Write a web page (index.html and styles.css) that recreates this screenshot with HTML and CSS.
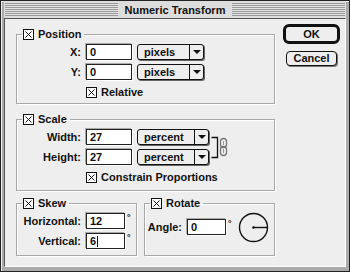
FILE: index.html
```html
<!DOCTYPE html>
<html lang="en">
<head>
  <title>Numeric Transform</title>
  <link rel="stylesheet" href="styles.css">
</head>
<body>
  <div class="window">
    <div class="titlebar">
      <div class="stripes"></div>
      <span class="title">Numeric Transform</span>
      <div class="stripes"></div>
    </div>
    <div class="pane">
      <div class="groups">

        <fieldset class="group pos">
          <legend><span class="check"><svg width="11" height="11" viewBox="0 0 11 11"><rect x="0.5" y="0.5" width="10" height="10" fill="#fff" stroke="#111"/><path d="M2.5 2.5 L8.5 8.5 M8.5 2.5 L2.5 8.5" stroke="#111" stroke-width="1"/></svg></span>Position</legend>
          <div class="row">
            <span class="lbl">X:</span>
            <span class="field wide">0</span>
            <span class="popup px"><span class="pv">pixels</span><span class="arr"></span></span>
          </div>
          <div class="row">
            <span class="lbl">Y:</span>
            <span class="field wide">0</span>
            <span class="popup px"><span class="pv">pixels</span><span class="arr"></span></span>
          </div>
          <div class="row opt">
            <span class="check"><svg width="11" height="11" viewBox="0 0 11 11"><rect x="0.5" y="0.5" width="10" height="10" fill="#fff" stroke="#111"/><path d="M2.5 2.5 L8.5 8.5 M8.5 2.5 L2.5 8.5" stroke="#111" stroke-width="1"/></svg></span>Relative
          </div>
        </fieldset>

        <fieldset class="group scale">
          <legend><span class="check"><svg width="11" height="11" viewBox="0 0 11 11"><rect x="0.5" y="0.5" width="10" height="10" fill="#fff" stroke="#111"/><path d="M2.5 2.5 L8.5 8.5 M8.5 2.5 L2.5 8.5" stroke="#111" stroke-width="1"/></svg></span>Scale</legend>
          <div class="linked">
            <div class="rows">
              <div class="row">
                <span class="lbl">Width:</span>
                <span class="field wide">27</span>
                <span class="popup pc"><span class="pv">percent</span><span class="arr"></span></span>
              </div>
              <div class="row">
                <span class="lbl">Height:</span>
                <span class="field wide">27</span>
                <span class="popup pc"><span class="pv">percent</span><span class="arr"></span></span>
              </div>
            </div>
            <svg class="link" width="18" height="24" viewBox="0 0 18 24">
              <path d="M0.5 2.5 H6.5 V22.5 H0.5" fill="none" stroke="#111" stroke-width="1.3"/>
              <rect x="9.5" y="3.5" width="6" height="9" rx="3" fill="none" stroke="#777" stroke-width="1.3"/>
              <rect x="9.5" y="11.5" width="6" height="9" rx="3" fill="none" stroke="#777" stroke-width="1.3"/>
              <path d="M12.5 6 V10 M12.5 14 V18" stroke="#999" stroke-width="1"/>
            </svg>
          </div>
          <div class="row opt">
            <span class="check"><svg width="11" height="11" viewBox="0 0 11 11"><rect x="0.5" y="0.5" width="10" height="10" fill="#fff" stroke="#111"/><path d="M2.5 2.5 L8.5 8.5 M8.5 2.5 L2.5 8.5" stroke="#111" stroke-width="1"/></svg></span>Constrain Proportions
          </div>
        </fieldset>

        <div class="pair">
          <fieldset class="group skew">
            <legend><span class="check"><svg width="11" height="11" viewBox="0 0 11 11"><rect x="0.5" y="0.5" width="10" height="10" fill="#fff" stroke="#111"/><path d="M2.5 2.5 L8.5 8.5 M8.5 2.5 L2.5 8.5" stroke="#111" stroke-width="1"/></svg></span>Skew</legend>
            <div class="row">
              <span class="lbl">Horizontal:</span>
              <span class="field narrow">12</span>
              <span class="deg">°</span>
            </div>
            <div class="row">
              <span class="lbl">Vertical:</span>
              <span class="field narrow">6<span class="caret"></span></span>
              <span class="deg">°</span>
            </div>
          </fieldset>

          <fieldset class="group rotate">
            <legend><span class="check"><svg width="11" height="11" viewBox="0 0 11 11"><rect x="0.5" y="0.5" width="10" height="10" fill="#fff" stroke="#111"/><path d="M2.5 2.5 L8.5 8.5 M8.5 2.5 L2.5 8.5" stroke="#111" stroke-width="1"/></svg></span>Rotate</legend>
            <div class="row">
              <span class="lbl short">Angle:</span>
              <span class="field narrow">0</span>
              <span class="deg">°</span>
              <svg class="dial" width="31" height="31" viewBox="0 0 31 31">
                <circle cx="15.5" cy="15.5" r="14" fill="none" stroke="#111" stroke-width="1.4"/>
                <path d="M15.5 15.5 H29" stroke="#111" stroke-width="1.4"/>
                <circle cx="15.5" cy="15.5" r="1.3" fill="#111"/>
              </svg>
            </div>
          </fieldset>
        </div>

      </div>
      <div class="buttons">
        <div class="btn ok">OK</div>
        <div class="btn">Cancel</div>
      </div>
    </div>
  </div>
</body>
</html>
```
FILE: styles.css
```css
body {
    margin: 0;
    background: #777;
    font-family: "Liberation Sans", Arial, sans-serif;
    font-weight: bold;
    font-size: 11px;
    color: #111;
}

.window {
    width: 350px;
    height: 272px;
    box-sizing: border-box;
    border: 1px solid #222;
    background: #aaa;
    padding: 0 3px 4px 3px;
    display: flex;
    flex-direction: column;
    box-shadow: inset 1px 1px 0 #eee;
}

.titlebar {
    height: 17px;
    display: flex;
    align-items: center;
    background: #ddd;
    padding: 0 1px;
}

.stripes {
    flex: 1;
    height: 13px;
    background: repeating-linear-gradient(#999 0 1px, #e4e4e4 1px 2px);
}

.title {
    padding: 0 7px;
    font-size: 11px;
    line-height: 14px;
}

.pane {
    flex: 1;
    display: flex;
    background: #eee;
    border: 1px solid;
    border-color: #555 #fff #fff #555;
    padding: 9px 0 0 11px;
}

.groups {
    width: 259px;
    display: flex;
    flex-direction: column;
}

.group {
    margin: 0;
    padding: 4px 0 5px 0;
    border: 1px solid #a8a8a8;
    box-shadow: 1px 1px 0 #fff, inset 1px 1px 0 #fff;
}

legend {
    margin-left: 5px;
    padding: 0 3px 0 1px;
    line-height: 12px;
    display: flex;
    align-items: center;
}

.check {
    display: inline-flex;
    width: 11px;
    height: 11px;
    margin-right: 4px;
}

.row {
    display: flex;
    align-items: center;
    height: 16px;
    margin-bottom: 4px;
}

.lbl {
    width: 64px;
    text-align: right;
    margin-right: 5px;
}

.lbl.short {
    width: 37px;
}

.field {
    box-sizing: border-box;
    height: 16px;
    background: #fff;
    border: 1px solid #222;
    box-shadow: -1px -1px 0 #aaa, 1px 1px 0 #fff;
    padding: 0 3px;
    line-height: 14px;
    display: flex;
    align-items: center;
}

.field.wide {
    width: 46px;
}

.field.narrow {
    width: 39px;
}

.caret {
    width: 1px;
    height: 11px;
    background: #111;
    margin-left: 1px;
}

.popup {
    box-sizing: border-box;
    height: 16px;
    margin-left: 5px;
    border: 1px solid #111;
    border-radius: 3px;
    box-shadow: 1px 1px 0 #666;
    background: #eee;
    display: flex;
}

.popup.px {
    width: 67px;
}

.popup.pc {
    width: 72px;
}

.pv {
    flex: 1;
    padding-left: 6px;
    line-height: 14px;
}

.arr {
    width: 13px;
    border-left: 1px solid #111;
    display: flex;
    align-items: center;
    justify-content: center;
}

.arr::after {
    content: "";
    border-left: 4px solid transparent;
    border-right: 4px solid transparent;
    border-top: 4px solid #111;
}

.opt {
    padding-left: 69px;
    margin-bottom: 0;
}

.pos .opt {
    margin-top: 2px;
}

.pos {
    padding-bottom: 3px;
}

.linked {
    display: flex;
    align-items: flex-start;
}

.link {
    margin: 6px 0 0 2px;
}

.scale {
    margin-top: 9px;
}

.pair {
    display: flex;
    gap: 7px;
    margin-top: 6px;
}

.skew {
    width: 121px;
    box-sizing: border-box;
    padding-bottom: 2px;
}

.rotate {
    flex: 1;
    padding-top: 10px;
}

.deg {
    font-size: 9px;
    align-self: flex-start;
    margin-left: 2px;
    line-height: 8px;
}

.dial {
    margin-left: 6px;
}

.buttons {
    margin-left: 8px;
    margin-top: -4px;
    display: flex;
    flex-direction: column;
    align-items: center;
    width: 57px;
}

.btn {
    box-sizing: border-box;
    width: 51px;
    height: 15px;
    border: 1px solid #111;
    border-radius: 4px;
    box-shadow: 1px 1px 0 #777;
    text-align: center;
    line-height: 13px;
    background: #eee;
}

.btn.ok {
    width: 57px;
    height: 20px;
    border: 3px solid #111;
    border-radius: 6px;
    line-height: 14px;
    margin-bottom: 7px;
    box-shadow: none;
}
```
